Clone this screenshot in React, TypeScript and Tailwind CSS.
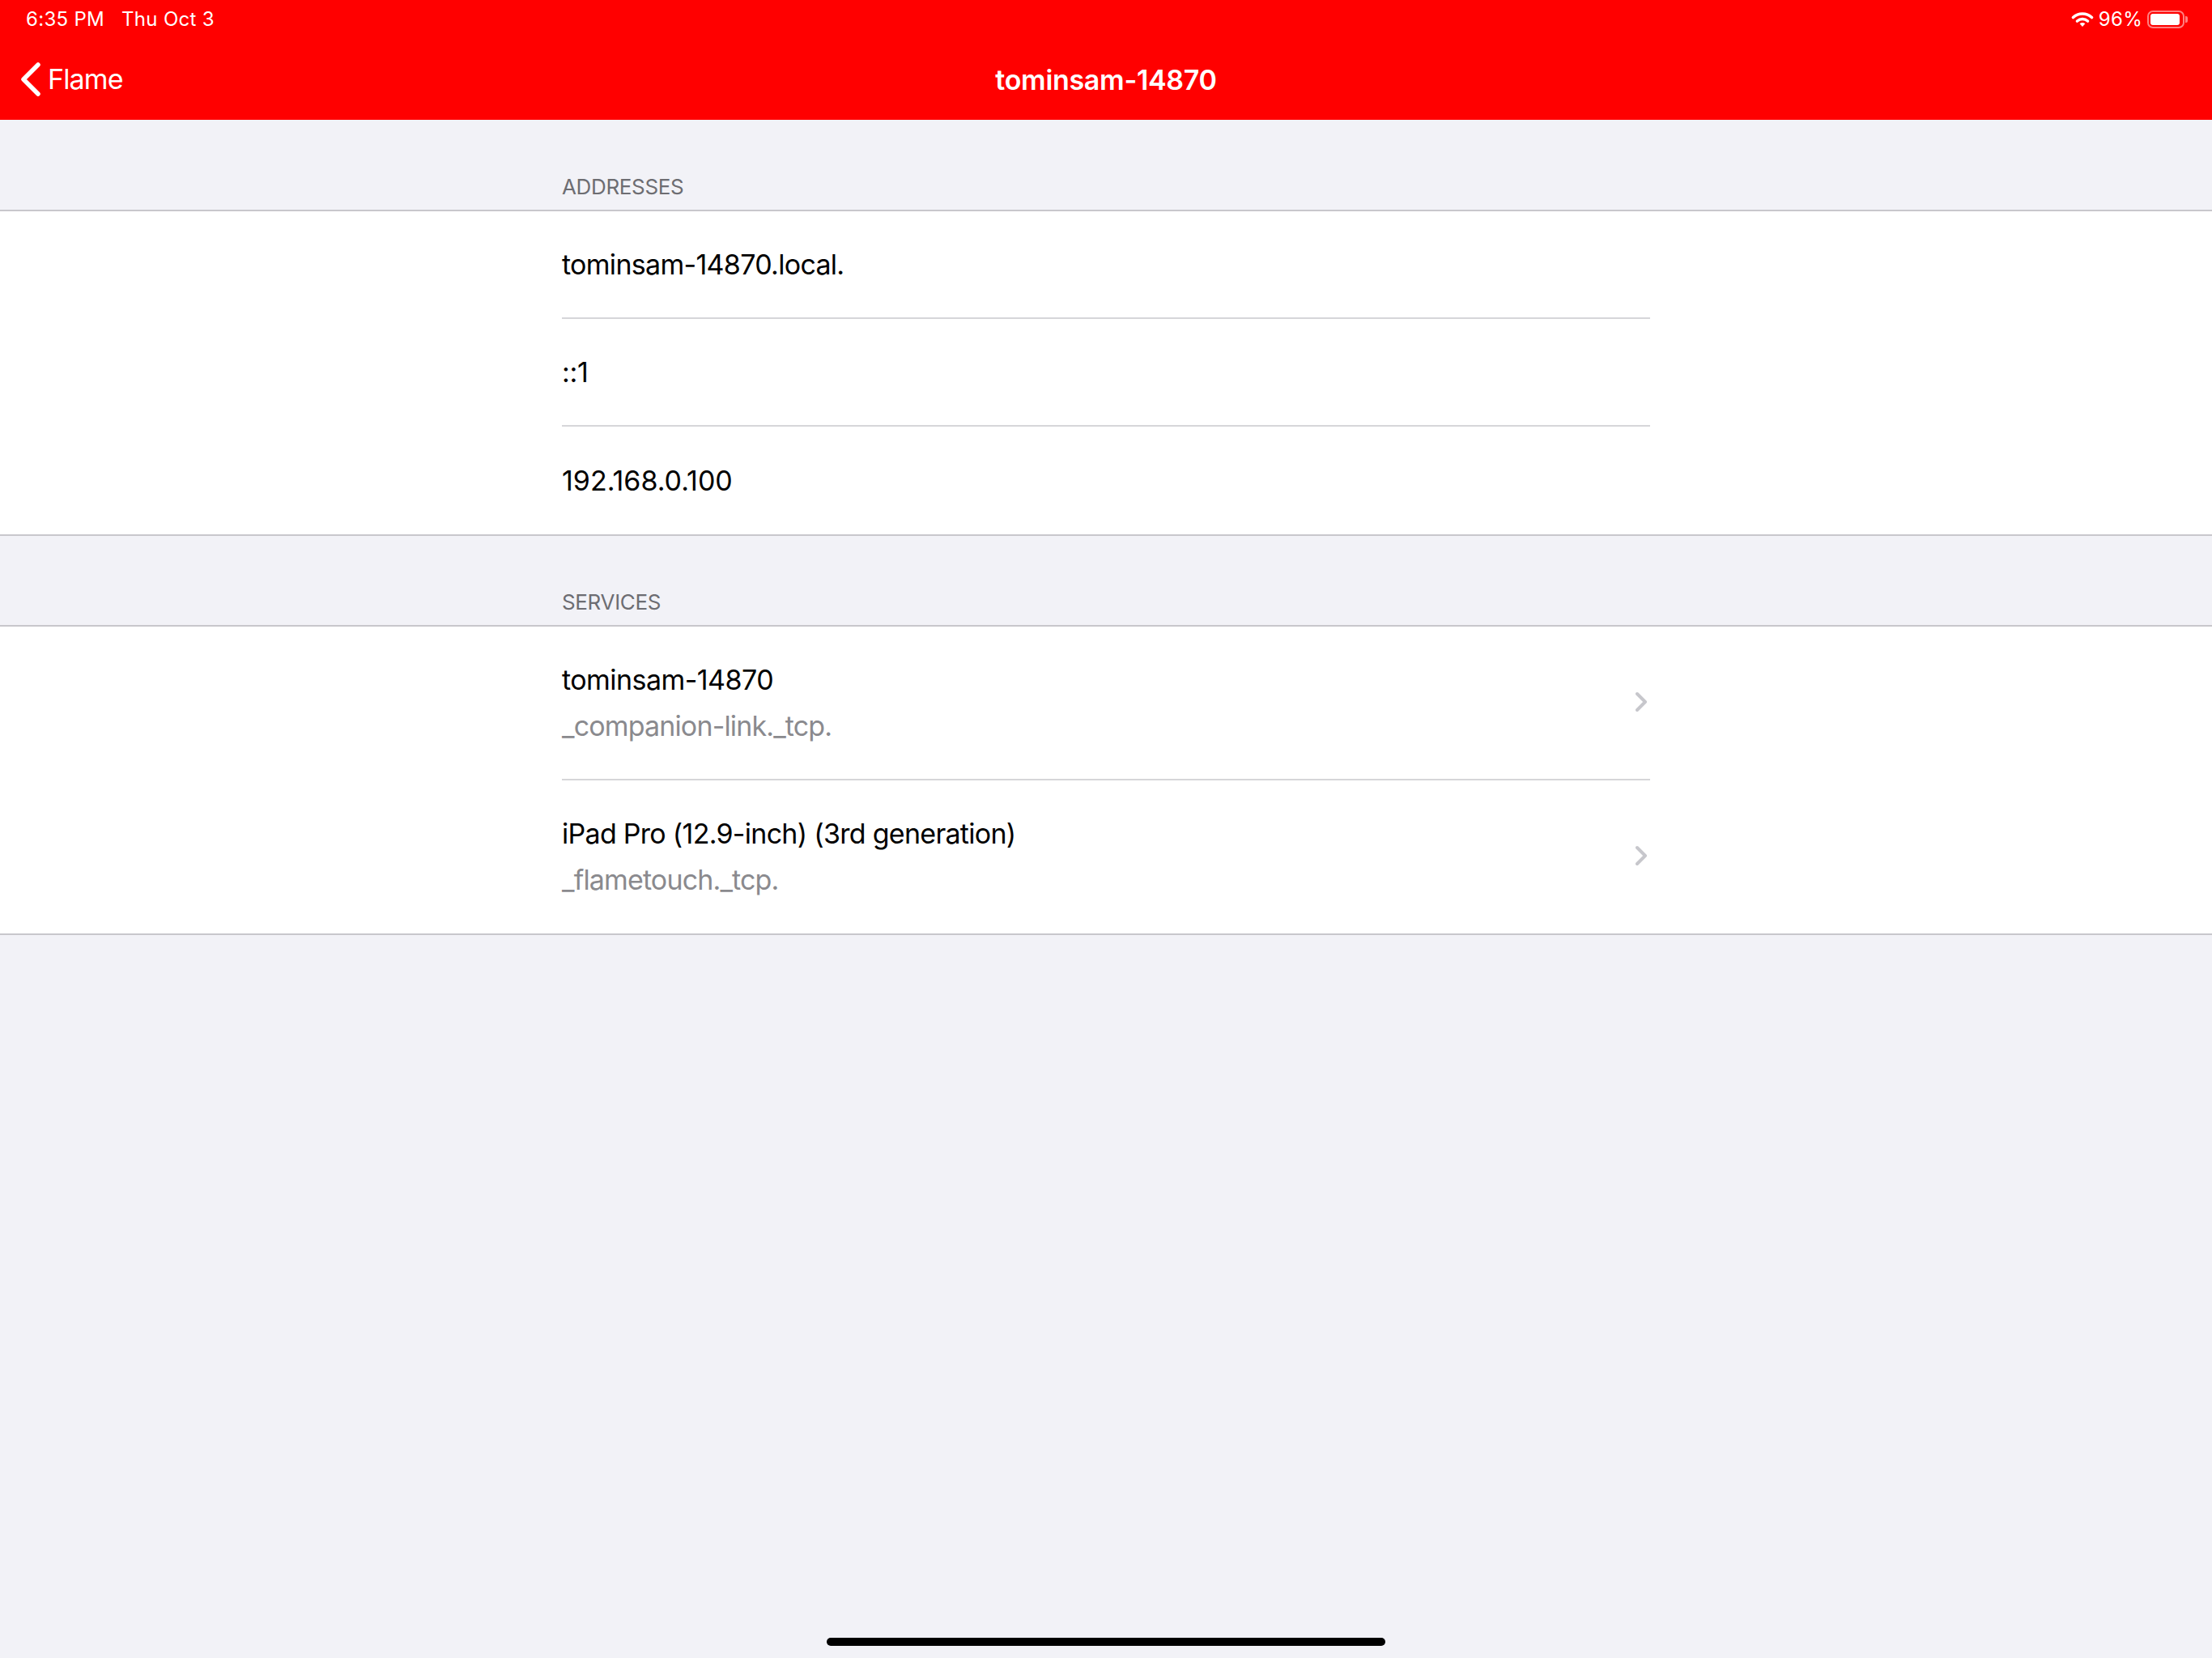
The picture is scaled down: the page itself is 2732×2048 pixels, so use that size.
const font = { fontFamily: 'Inter, "Liberation Sans", sans-serif' };

function Chevron() {
  return (
    <svg width="18" height="26" viewBox="0 0 18 26" fill="none" className="shrink-0 mb-[3px]">
      <path d="M2 3L12 13L2 23" stroke="#c7c7cc" strokeWidth="4" strokeLinecap="round" strokeLinejoin="round" />
    </svg>
  );
}

function SectionHeader({ title, height }: { title: string; height: string }) {
  return (
    <div className={height + " pl-[694px] flex items-end pb-[12px] border-b-2 border-[#c8c7cc] box-content"}>
      <span className="text-[26px] leading-[32px] tracking-[-0.35px] text-[#6d6d72]">{title}</span>
    </div>
  );
}

function PlainRow({ text, track, last }: { text: string; track: string; last?: boolean }) {
  return (
    <div className="pl-[694px] pr-[694px]">
      <div className={"h-[133px] flex items-center text-[34px] text-black " + track + (last ? "" : " border-b-2 border-[#d6d6d9]")}>
        {text}
      </div>
    </div>
  );
}

function ServiceRow({ title, sub, track, height, last }: { title: string; sub: string; track: string; height: string; last?: boolean }) {
  return (
    <div className="pl-[694px] pr-[694px]">
      <div className={height + " flex items-center justify-between" + (last ? "" : " border-b-2 border-[#d6d6d9]")}>
        <div className="flex flex-col gap-[16px] pb-[1px]">
          <span className={"text-[34px] leading-[41px] text-black " + track}>{title}</span>
          <span className="text-[34px] leading-[41px] text-[#8a8a8e] tracking-[-0.85px]">{sub}</span>
        </div>
        <Chevron />
      </div>
    </div>
  );
}

export default function App() {
  return (
    <div style={font} className="w-[2732px] h-[2048px] bg-[#f2f2f7] flex flex-col overflow-hidden">
      <header className="h-[148px] bg-[#ff0000] text-white shrink-0 flex flex-col">
        <div className="h-[48px] flex items-center justify-between pl-[32px] pr-[30px] text-[24px] tracking-[0.3px]">
          <div className="flex gap-[21px]">
            <span>6:35 PM</span>
            <span>Thu Oct 3</span>
          </div>
          <div className="flex items-center gap-[6px]">
            <svg width="28" height="20" viewBox="0 0 28 20" fill="none">
              <path d="M2.5 7.5C9 1.5 19 1.5 25.5 7.5" stroke="white" strokeWidth="3.6" strokeLinecap="round" />
              <path d="M7.5 12C11.3 8.7 16.7 8.7 20.5 12" stroke="white" strokeWidth="3.6" strokeLinecap="round" />
              <path d="M10.6 15.2L14 19L17.4 15.2C15.4 13.6 12.6 13.6 10.6 15.2Z" fill="white" />
            </svg>
            <span>96%</span>
            <div className="flex items-center gap-[1px]">
              <div className="w-[46px] h-[22px] rounded-[7px] border-2 border-[#ff8080] p-[2px]">
                <div className="w-[96%] h-full bg-white rounded-[3px]" />
              </div>
              <div className="w-[3px] h-[8px] bg-[#ff8080] rounded-r-[2px]" />
            </div>
          </div>
        </div>
        <div className="relative flex-1 flex items-center justify-center">
          <div className="absolute left-[26px] top-0 bottom-0 flex items-center gap-[9px]">
            <svg width="24" height="42" viewBox="0 0 24 42" fill="none">
              <path d="M21 3L3 21L21 39" stroke="white" strokeWidth="5.5" strokeLinecap="round" strokeLinejoin="round" />
            </svg>
            <span className="text-[34px] leading-[44px] tracking-[-0.85px]">Flame</span>
          </div>
          <span className="text-[34px] font-semibold tracking-[-0.3px]">tominsam-14870</span>
        </div>
      </header>

      <main className="flex-1 flex flex-col">
        <SectionHeader title="ADDRESSES" height="h-[99px]" />
        <section className="bg-white border-b-2 border-[#c8c7cc]">
          <PlainRow text="tominsam-14870.local." track="tracking-[-0.7px]" />
          <PlainRow text="::1" track="tracking-[-0.3px]" />
          <PlainRow text="192.168.0.100" track="tracking-[0px]" last />
        </section>
        <SectionHeader title="SERVICES" height="h-[98px]" />
        <section className="bg-white border-b-2 border-[#c8c7cc]">
          <ServiceRow title="tominsam-14870" sub="_companion-link._tcp." track="tracking-[-0.55px]" height="h-[190px]" />
          <ServiceRow title="iPad Pro (12.9-inch) (3rd generation)" sub="_flametouch._tcp." track="tracking-[-0.72px]" height="h-[189px]" last />
        </section>
      </main>

      <div className="h-[25px] flex justify-center shrink-0">
        <div className="w-[690px] h-[10px] rounded-full bg-black" />
      </div>
    </div>
  );
}
